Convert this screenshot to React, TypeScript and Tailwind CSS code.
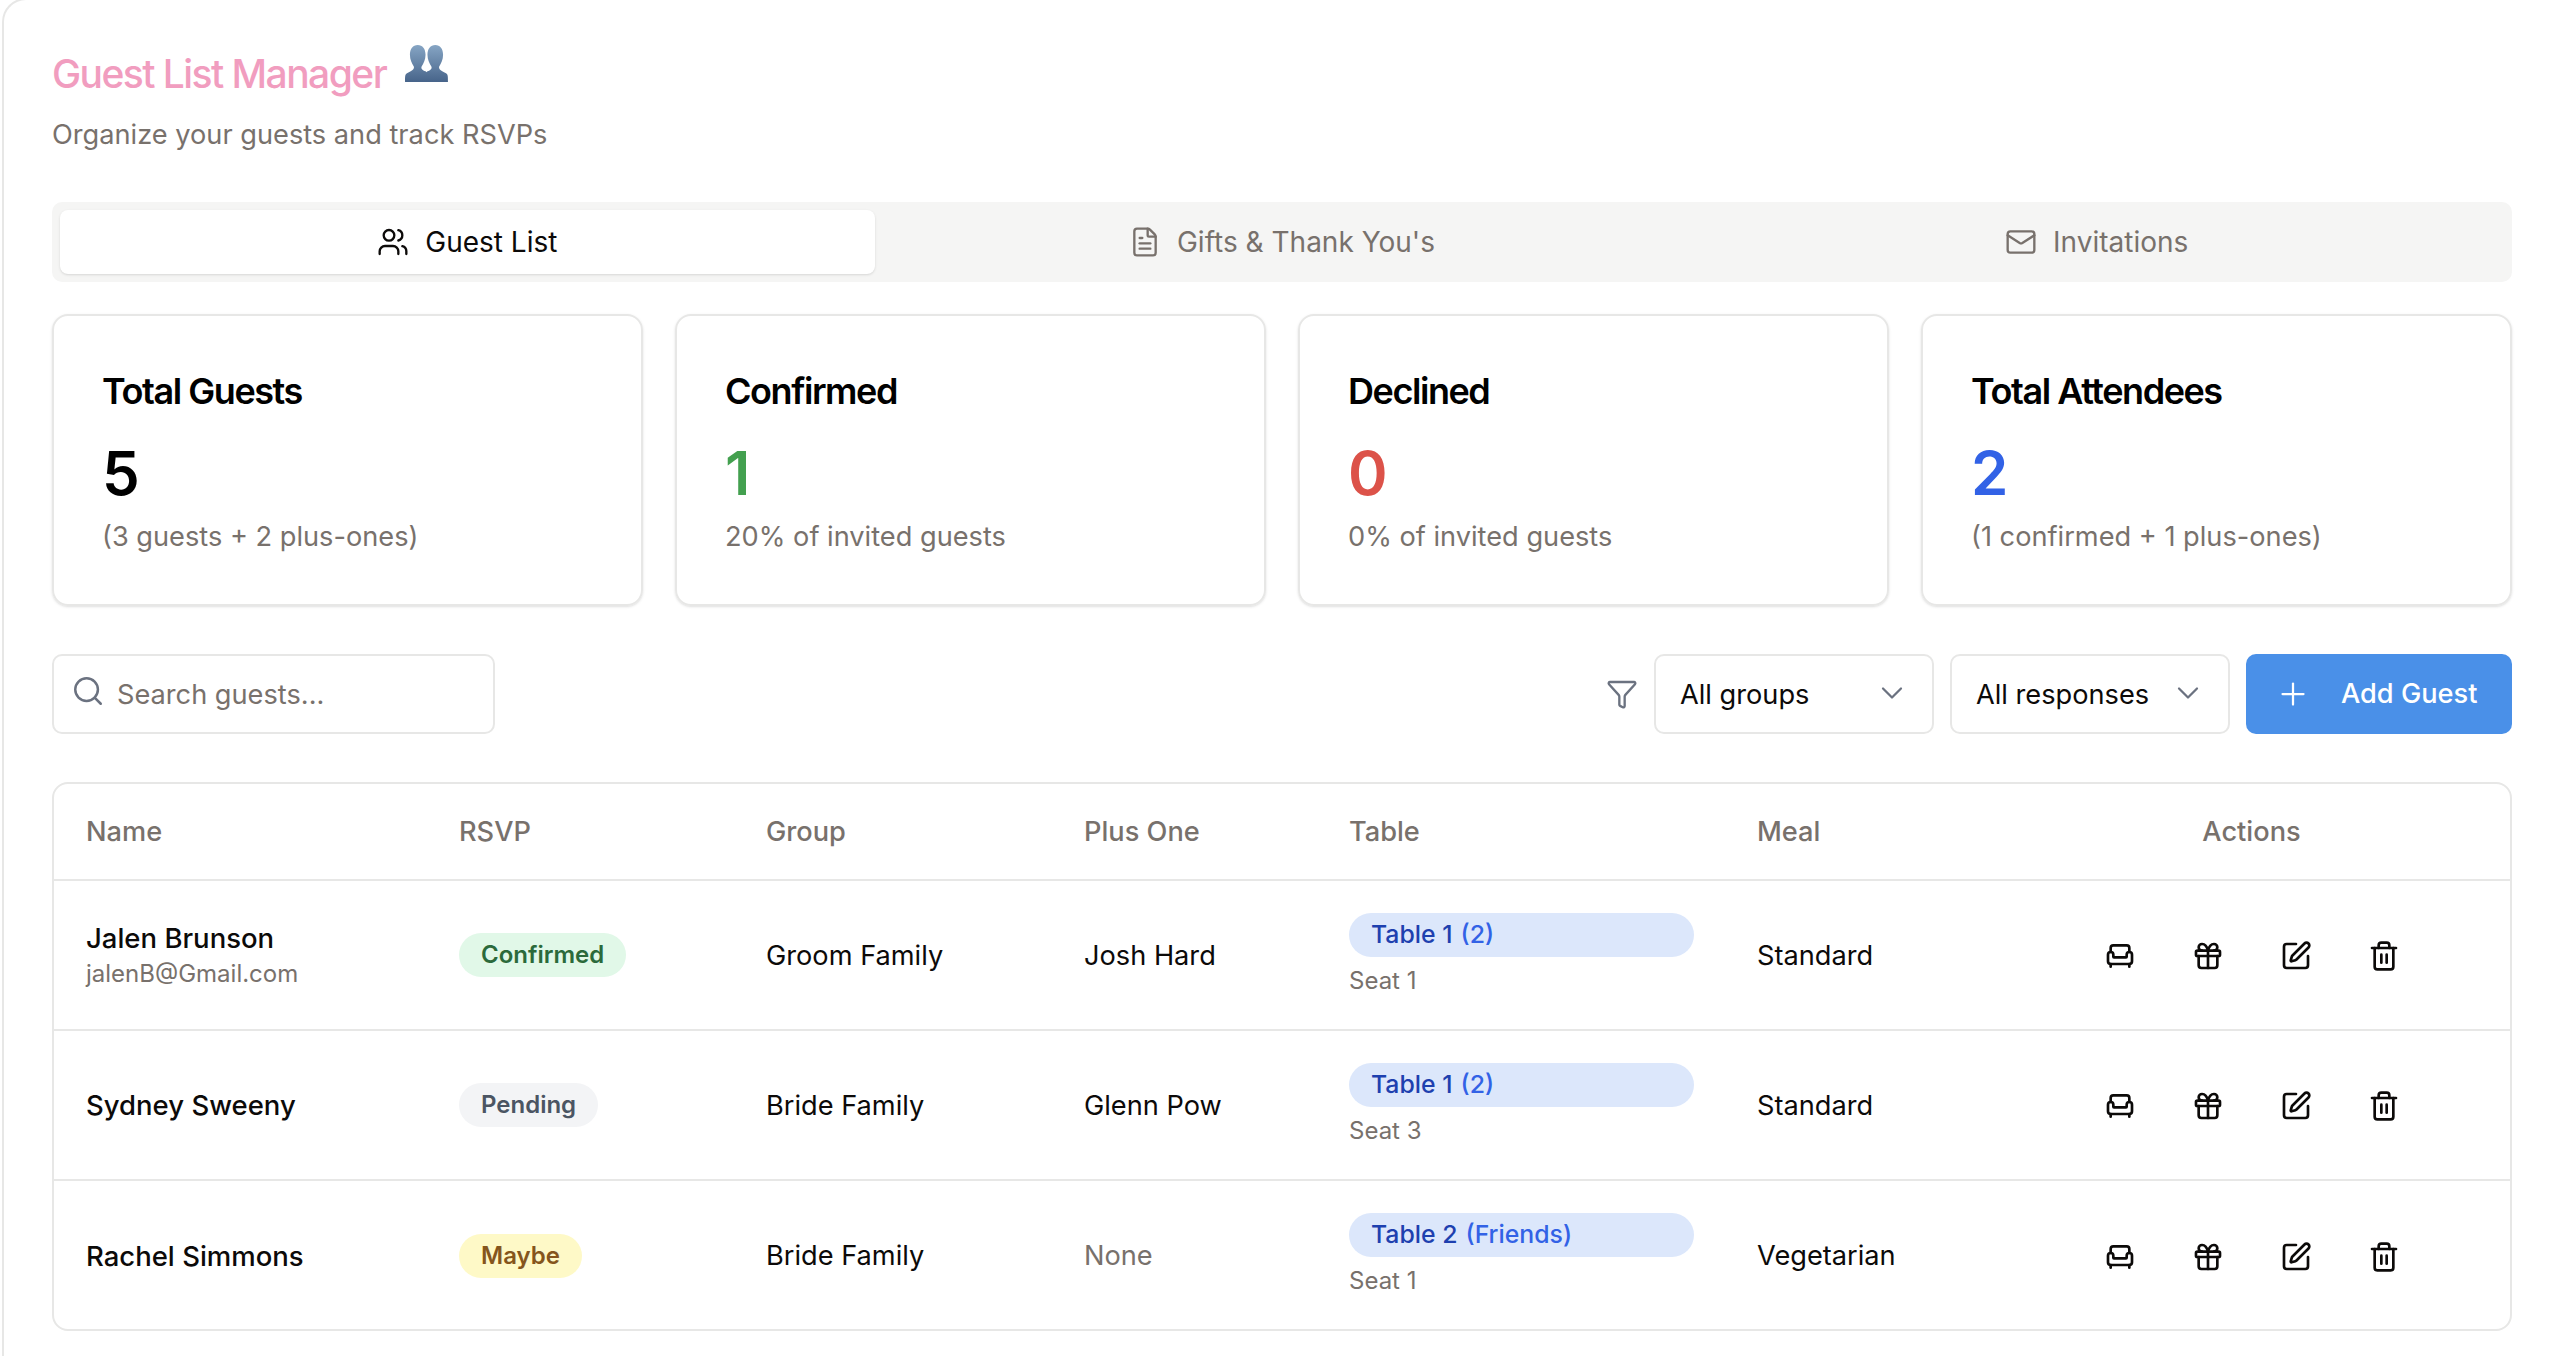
import React from 'react'
import { Armchair, ChevronDown, FileText, Funnel, Gift, Mail, Plus, Search, SquarePen, Trash2, Users } from 'lucide-react'

const stats = [
  { title: 'Total Guests', value: '5', color: 'text-black', note: '(3 guests + 2 plus-ones)' },
  { title: 'Confirmed', value: '1', color: 'text-[#43a04f]', note: '20% of invited guests' },
  { title: 'Declined', value: '0', color: 'text-[#dc5249]', note: '0% of invited guests' },
  { title: 'Total Attendees', value: '2', color: 'text-[#3262e6]', note: '(1 confirmed + 1 plus-ones)' },
]

const guests = [
  {
    name: 'Jalen Brunson',
    email: 'jalenB@Gmail.com',
    rsvp: 'Confirmed',
    badge: 'bg-[#e1f8e8] text-[#2b6a3b]',
    group: 'Groom Family',
    plusOne: 'Josh Hard',
    table: 'Table 1',
    tableNote: '(2)',
    seat: 'Seat 1',
    meal: 'Standard',
  },
  {
    name: 'Sydney Sweeny',
    rsvp: 'Pending',
    badge: 'bg-[#f3f4f6] text-[#4b5563]',
    group: 'Bride Family',
    plusOne: 'Glenn Pow',
    table: 'Table 1',
    tableNote: '(2)',
    seat: 'Seat 3',
    meal: 'Standard',
  },
  {
    name: 'Rachel Simmons',
    rsvp: 'Maybe',
    badge: 'bg-[#fef9c7] text-[#85551c]',
    group: 'Bride Family',
    plusOne: 'None',
    table: 'Table 2',
    tableNote: '(Friends)',
    seat: 'Seat 1',
    meal: 'Vegetarian',
  },
]

const BustsIcon = () => (
  <svg width="43" height="39" viewBox="0 0 44 40">
    <defs>
      <linearGradient id="bust" x1="0" y1="0" x2="0" y2="1">
        <stop offset="0" stopColor="#86a5c4" />
        <stop offset="1" stopColor="#47648a" />
      </linearGradient>
    </defs>
    <path
      fill="url(#bust)"
      d="M13 1c5 0 8 4 8 10 0 5-2 9-4 12-1 2 1 4 4 5 1 1 1 1 1 1s0 0 1-1c3-1 5-3 4-5-2-3-4-7-4-12 0-6 3-10 8-10s8 4 8 10c0 5-2 9-4 12-1 3 3 5 7 7 2 1 2 3 2 9H0c0-6 0-8 2-9 4-2 8-4 7-7-2-3-4-7-4-12C5 5 8 1 13 1z"
    />
  </svg>
)

const Select = ({ label, width }: { label: string; width: string }) => (
  <div className={`${width} h-[80px] flex items-center justify-between pl-[24px] pr-[22px] rounded-[10px] border-2 border-[#e7e7e6] text-[27.2px] text-[#0c0a09]`}>
    <span className="pt-[3px]">{label}</span>
    <ChevronDown className="w-[36px] h-[36px] -mt-[2px] text-[#6b7280]" strokeWidth={1.5} />
  </div>
)

export default function App() {
  return (
    <div className="h-screen overflow-hidden bg-white font-['Inter',sans-serif]">
      <div className="h-[1400px] -mt-[2px] ml-[2px] border-l-2 border-t-2 border-[#e7e7e6] rounded-tl-[24px] pl-[48px] pr-[44px] pt-[50px]">
        <div className="flex items-start">
          <h1 className="text-[39px] leading-[48px] font-medium tracking-[-0.04em] text-[#f19dbf]">Guest List Manager</h1>
          <div className="ml-[19px] -mt-[6px]">
            <BustsIcon />
          </div>
        </div>
        <p className="mt-[19px] text-[27.2px] leading-[36px] text-[#78716c]">Organize your guests and track RSVPs</p>

        <div className="mt-[49px] h-[80px] p-[8px] rounded-[10px] bg-[#f5f5f4] grid grid-cols-3">
          <div className="flex items-center justify-center gap-[16px] rounded-[8px] bg-white shadow-sm text-[28px] text-[#0c0a09]">
            <Users className="w-[32px] h-[32px]" strokeWidth={1.75} />
            Guest List
          </div>
          <div className="flex items-center justify-center gap-[16px] text-[28px] text-[#78716c]">
            <FileText className="w-[32px] h-[32px]" strokeWidth={1.75} />
            Gifts &amp; Thank You's
          </div>
          <div className="flex items-center justify-center gap-[16px] text-[28px] text-[#78716c]">
            <Mail className="w-[32px] h-[32px]" strokeWidth={1.75} />
            Invitations
          </div>
        </div>

        <div className="mt-[32px] grid grid-cols-4 gap-[32px]">
          {stats.map(s => (
            <div key={s.title} className="h-[292px] rounded-[16px] border-2 border-[#e7e7e6] shadow-sm pl-[48px] pr-[40px] pt-[51px]">
              <h3 className="text-[36px] leading-[48px] font-semibold tracking-[-0.04em] text-black">{s.title}</h3>
              <div className={`mt-[26px] text-[60px] leading-[64px] font-semibold ${s.color}`}>{s.value}</div>
              <p className="mt-[14px] text-[27.2px] leading-[36px] text-[#78716c]">{s.note}</p>
            </div>
          ))}
        </div>

        <div className="mt-[48px] flex items-center">
          <div className="w-[443px] h-[80px] flex items-center gap-[12px] pl-[17px] rounded-[10px] border-2 border-[#e7e7e6] text-[27.2px] text-[#78716c]">
            <Search className="w-[34px] h-[34px] -mt-[6px] text-[#6b7280]" strokeWidth={1.75} />
            <span className="pt-[3px]">Search guests...</span>
          </div>
          <Funnel className="ml-auto w-[32px] h-[32px] text-[#6b7280]" strokeWidth={1.75} />
          <div className="ml-[16px]">
            <Select label="All groups" width="w-[280px]" />
          </div>
          <div className="ml-[16px]">
            <Select label="All responses" width="w-[280px]" />
          </div>
          <div className="ml-[16px] w-[266px] h-[80px] flex items-center gap-[30px] pl-[29px] rounded-[10px] bg-[#4a90e8] text-[27.2px] font-medium text-white">
            <Plus className="w-[36px] h-[36px]" strokeWidth={1.5} />
            Add Guest
          </div>
        </div>

        <div className="mt-[48px] h-[549px] rounded-[16px] border-2 border-[#e7e7e6] overflow-hidden">
          <table className="w-full table-fixed border-collapse text-[27.2px]">
            <colgroup>
              <col className="w-[373px]" />
              <col className="w-[307px]" />
              <col className="w-[318px]" />
              <col className="w-[265px]" />
              <col className="w-[408px]" />
              <col className="w-[268px]" />
              <col />
            </colgroup>
            <thead>
              <tr className="h-[96px] border-b-2 border-[#e7e7e6] text-[#78716c]">
                <th className="pl-[32px] pt-[2px] text-left font-medium">Name</th>
                <th className="pl-[32px] pt-[2px] text-left font-medium">RSVP</th>
                <th className="pl-[32px] pt-[2px] text-left font-medium">Group</th>
                <th className="pl-[32px] pt-[2px] text-left font-medium">Plus One</th>
                <th className="pl-[32px] pt-[2px] text-left font-medium">Table</th>
                <th className="pl-[32px] pt-[2px] text-left font-medium">Meal</th>
                <th className="pt-[2px] text-center font-medium">Actions</th>
              </tr>
            </thead>
            <tbody>
              {guests.map(g => (
                <tr key={g.name} className="h-[150px] border-b-2 border-[#e7e7e6] last:border-b-0 text-[#0c0a09]">
                  <td className="pl-[32px]">
                    <div className="text-[27.5px] font-medium leading-[34px]">{g.name}</div>
                    {g.email && <div className="mt-[4px] text-[24px] leading-[30px] text-[#78716c]">{g.email}</div>}
                  </td>
                  <td className="pl-[32px]">
                    <span className={`inline-block rounded-full px-[22px] py-[5px] text-[24px] leading-[34px] font-semibold ${g.badge}`}>{g.rsvp}</span>
                  </td>
                  <td className="pl-[32px] pt-[2px]">{g.group}</td>
                  <td className={`pl-[32px] pt-[2px] ${g.plusOne === 'None' ? 'text-[#78716c]' : ''}`}>{g.plusOne}</td>
                  <td className="pl-[32px] pr-[31px] pb-[2px]">
                    <div className="h-[44px] flex items-center gap-[8px] rounded-full bg-[#dce7fb] px-[22px] text-[24.8px] font-medium text-[#1e40af]">
                      {g.table}
                      <span className="text-[#3262e6]">{g.tableNote}</span>
                    </div>
                    <div className="mt-[9px] text-[24px] leading-[30px] text-[#78716c]">{g.seat}</div>
                  </td>
                  <td className="pl-[32px] pt-[2px]">{g.meal}</td>
                  <td className="pt-[2px]">
                    <div className="flex items-center justify-center gap-[56px]">
                      <Armchair className="w-[32px] h-[32px]" />
                      <Gift className="w-[32px] h-[32px]" />
                      <SquarePen className="w-[32px] h-[32px]" />
                      <Trash2 className="w-[32px] h-[32px]" />
                    </div>
                  </td>
                </tr>
              ))}
            </tbody>
          </table>
        </div>
      </div>
    </div>
  )
}
